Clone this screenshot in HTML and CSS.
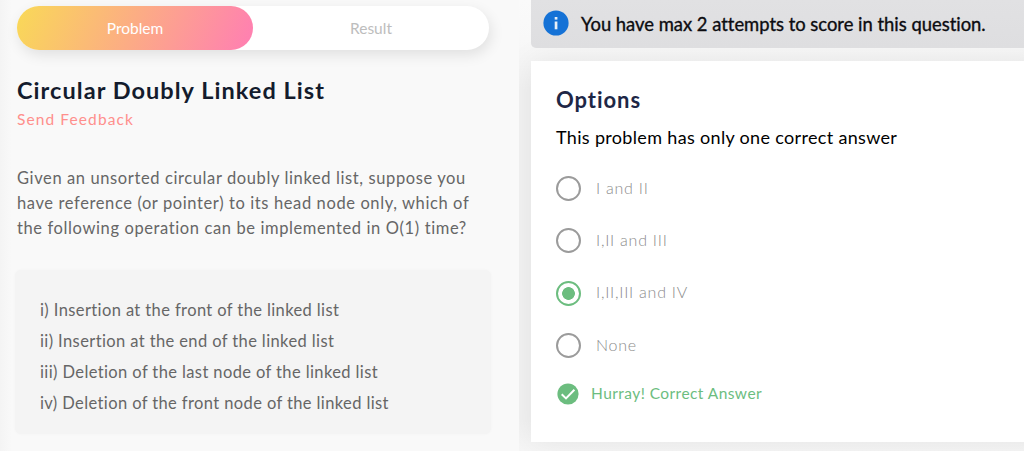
FILE: index.html
```html
<!DOCTYPE html>
<html lang="en">
<head>
<meta charset="utf-8">
<title>Circular Doubly Linked List</title>
<link rel="stylesheet" href="styles.css">
</head>
<body>
<div class="page">
  <section class="problem">
    <nav class="tabs">
      <span class="tab active">Problem</span>
      <span class="tab">Result</span>
    </nav>
    <h1 class="title">Circular Doubly Linked List</h1>
    <a class="feedback">Send Feedback</a>
    <p class="statement">Given an unsorted circular doubly linked list, suppose you<br>have reference (or pointer) to its head node only, which of<br>the following operation can be implemented in O(1) time?</p>
    <div class="operations">
      <div>i) Insertion at the front of the linked list</div>
      <div>ii) Insertion at the end of the linked list</div>
      <div>iii) Deletion of the last node of the linked list</div>
      <div>iv) Deletion of the front node of the linked list</div>
    </div>
  </section>
  <section class="answer">
    <div class="banner">
      <svg class="info" viewBox="0 0 26 26" width="26" height="26"><circle cx="13" cy="13" r="12.6" fill="#1572d6"/><rect x="11.7" y="7" width="2.7" height="2.6" fill="#e8f0f8"/><rect x="11.7" y="11.5" width="2.7" height="7.8" fill="#e8f0f8"/></svg>
      <span class="banner-text">You have max 2 attempts to score in this question.</span>
    </div>
    <div class="card">
      <h2 class="heading">Options</h2>
      <p class="hint">This problem has only one correct answer</p>
      <div class="option"><i class="radio"></i><span>I and II</span></div>
      <div class="option"><i class="radio"></i><span>I,II and III</span></div>
      <div class="option"><i class="radio checked"></i><span>I,II,III and IV</span></div>
      <div class="option"><i class="radio"></i><span>None</span></div>
      <div class="verdict">
        <svg viewBox="0 0 22 22" width="22" height="22"><circle cx="11" cy="11" r="10.6" fill="#6cbd7f"/><path d="M4.7 11.2 9 15.4 17.4 6.7" fill="none" stroke="#fff" stroke-width="2"/></svg>
        <span class="verdict-text">Hurray! Correct Answer</span>
      </div>
    </div>
  </section>
</div>
</body>
</html>
```
FILE: styles.css
```css
* { box-sizing: border-box; }
body { margin: 0; font-family: Lato, sans-serif; background: #fff; }
h1, h2, p { margin: 0; }
span, h1, h2, p, .operations { white-space: nowrap; }
.page { display: flex; width: 1024px; height: 451px; overflow: hidden; }
.problem {
  width: 519px; height: 451px; padding: 6px 29px 0 17px; position: relative; z-index: 1;
  background: linear-gradient(90deg, #f4f4f4, #f9f9f9 12px);
}
.tabs { display: flex; width: 472px; height: 44px; border-radius: 22px; background: #fff; box-shadow: 2px 5px 14px rgba(0,0,0,.1); }
.tab { width: 236px; line-height: 44px; border-radius: 22px; text-align: center; font-size: 15.5px; color: #bdbdbd; }
.tab.active { color: #fff; background: linear-gradient(113deg, #f9d957, #ff7eb3); }
.title { margin-top: 25px; height: 30px; line-height: 30px; font-size: 23.5px; font-weight: 700; color: #141c2d; letter-spacing: 1.05px; }
.feedback { display: block; margin-top: 4px; height: 20px; line-height: 20px; font-size: 15.5px; color: #ff8f8c; letter-spacing: 1.1px; }
.statement { margin-top: 37px; font-size: 16.5px; line-height: 25px; color: #666; letter-spacing: .61px; }
.operations { margin: 29px 0 0 -2px; width: 476px; height: 164px; padding: 25px 25px 0; border-radius: 6px; background: #f4f4f4; box-shadow: 0 0 3px rgba(0,0,0,.03); font-size: 16.5px; line-height: 31px; color: #666; letter-spacing: .39px; }
.answer { flex: 1; padding-left: 12px; background: linear-gradient(#fafafa, #f8f8f8 40px, #f2f2f2 90px, #f2f2f2 420px, #f6f6f6); }
.banner { display: flex; align-items: center; height: 48px; padding-left: 12px; border-radius: 0 0 0 5px; background: linear-gradient(#e1e1e3, #dedee0); position: relative; z-index: 1; }
.info { margin-top: -2px; }
.banner-text { margin: 0 0 0 12px; font-size: 18.4px; color: #0c0c10; -webkit-text-stroke: .35px #0c0c10; font-variant-ligatures: none; }
.card { width: 520px; height: 381px; margin-top: 13px; padding: 24px 25px 0; background: #fff; box-shadow: 0 0 30px rgba(0,0,0,.07); }
.heading { height: 30px; line-height: 30px; font-size: 22px; font-weight: 700; color: #1e2746; letter-spacing: .95px; }
.hint { margin-top: 9px; height: 26px; line-height: 26px; font-size: 18px; color: #000; letter-spacing: .33px; }
.option { display: flex; align-items: center; height: 25px; margin-bottom: 27.4px; font-size: 16px; font-weight: 300; color: #8c8c8c; letter-spacing: .75px; }
.hint + .option { margin-top: 26px; }
.option span { margin: -3px 0 0 15px; }
.radio { width: 25px; height: 25px; border: 2px solid #9b9b9b; border-radius: 50%; }
.radio.checked { border-color: #6cbd7f; background: radial-gradient(circle, #6cbd7f 6px, transparent 6.7px); }
.verdict { display: flex; align-items: center; height: 22px; margin-top: -2.5px; padding-left: 1px; font-size: 15.5px; color: #6cbd7f; letter-spacing: .44px; }
.verdict svg { margin-right: 12px; }
.verdict-text { margin-top: -2px; }
```
